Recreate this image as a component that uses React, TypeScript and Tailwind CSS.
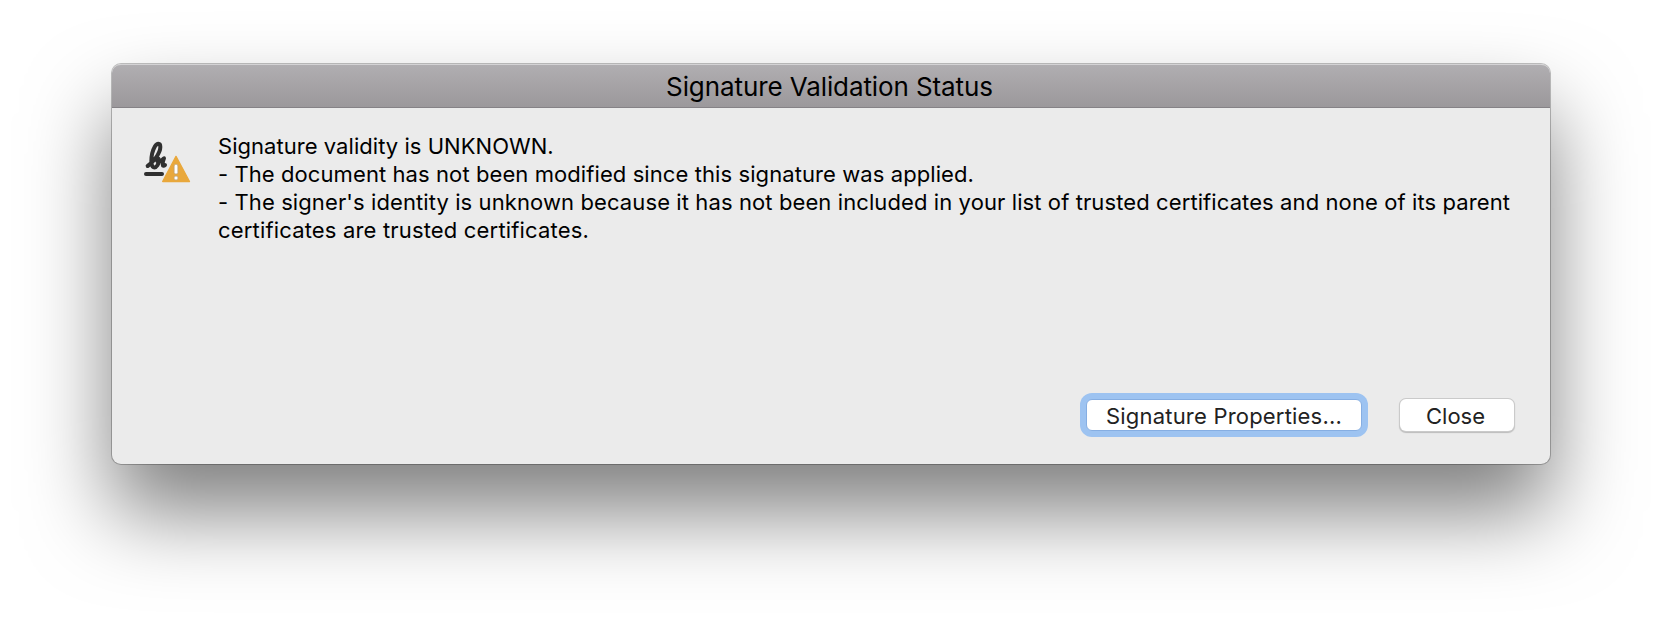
function SignatureWarningIcon() {
  return (
    <svg viewBox="0 0 144 138" className="h-[46px] w-12" aria-hidden="true">
      <g fill="none" stroke="#303030" strokeLinecap="round" strokeLinejoin="round">
        <path
          strokeWidth="12"
          d="M11 84 C28 72 49 46 49 27 C49 14 39 15 33 25 C26 37 22 54 22 70 C22 91 33 92 40 82 C46 73 46 62 41 61 C36 62 38 71 45 71 C53 71 57 62 60 61 C55 73 54 90 63 81"
        />
        <path strokeWidth="12" d="M6 108 H54" />
      </g>
      <path d="M96 53 L54 132 H138 Z" fill="#ebebeb" stroke="#ebebeb" strokeWidth="8" strokeLinejoin="round" />
      <path d="M96 55 L56 130.500 H136.500 Z" fill="#e9a83c" stroke="#e9a83c" strokeWidth="4" strokeLinejoin="round" />
      <rect x="90.500" y="79" width="11" height="29" rx="5" fill="#fff" stroke="#b5a184" strokeWidth="2" />
      <circle cx="96" cy="120" r="6" fill="#fff" stroke="#b5a184" strokeWidth="2" />
    </svg>
  );
}

export default function App() {
  return (
    <main className="flex h-[624px] w-full justify-center overflow-hidden bg-white pt-16 font-[Inter,'Noto_Sans',sans-serif]">
      <section className="flex h-[400px] w-[1438px] flex-col rounded-[9px] bg-[#ebebeb] shadow-[0_0_0_1px_rgba(0,0,0,0.24),0_48px_84px_rgba(0,0,0,0.5)]">
        <header className="flex h-11 shrink-0 items-center justify-center rounded-t-[9px] border-t border-b border-t-[#d4d3d5] border-b-[#858286] bg-linear-to-b from-[#b0aeb1] to-[#9b989b] pt-[2px] pr-[3px]">
          <h1 className="text-[26px] leading-[40px] tracking-[-0.1px] whitespace-nowrap text-black">
            Signature Validation Status
          </h1>
        </header>

        <div className="flex grow pt-6 pl-8">
          <div className="w-[74px] shrink-0 pt-[6px]">
            <SignatureWarningIcon />
          </div>
          <div className="text-[22px] leading-7 whitespace-nowrap text-black">
            <p className="tracking-[0.04px]">Signature validity is UNKNOWN.</p>
            <p className="tracking-[0.085px]">- The document has not been modified since this signature was applied.</p>
            <p className="tracking-[0.1px]">
              - The signer's identity is unknown because it has not been included in your list of trusted certificates
              and none of its parent
            </p>
            <p className="tracking-[0.17px]">certificates are trusted certificates.</p>
          </div>
        </div>

        <footer className="flex justify-end gap-[38px] pr-9 pb-[33px] text-[22px] leading-[30px] text-[#222]">
          <button className="h-8 w-[276px] rounded-[6px] border border-[#86aee2] bg-white pt-px tracking-[0.2px] shadow-[0_0_0_6px_#9dc3f1]">
            Signature Properties...
          </button>
          <button className="h-8 w-[114px] rounded-[6px] bg-white pt-px pr-[3px] shadow-[0_0_0_1px_#cacaca,0_1px_1px_1px_rgba(0,0,0,0.2)]">
            Close
          </button>
        </footer>
      </section>
    </main>
  );
}
